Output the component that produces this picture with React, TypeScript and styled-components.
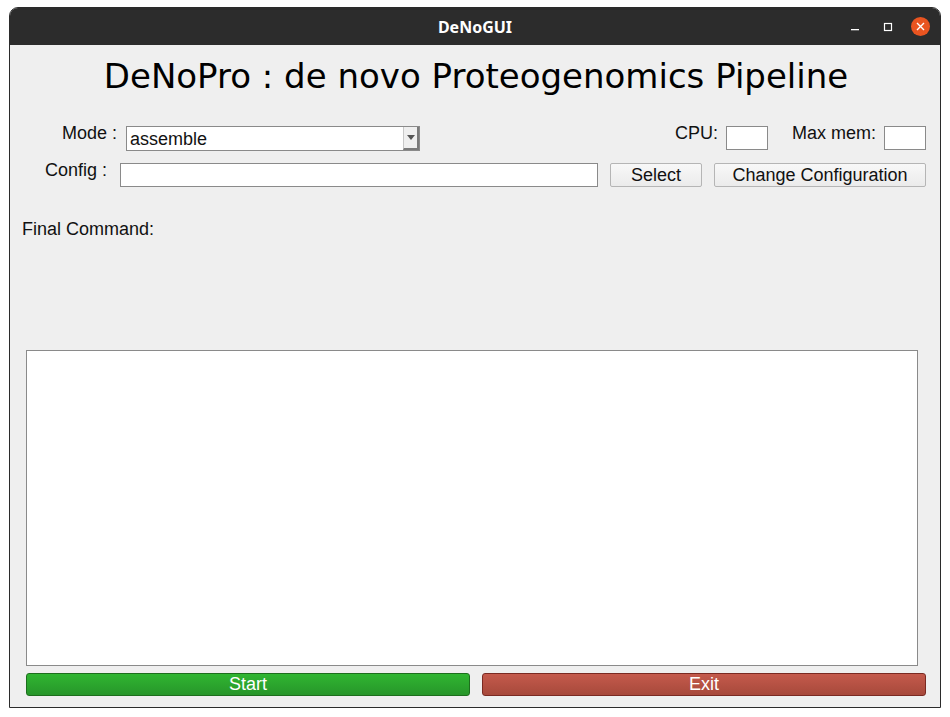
import React from "react";
import styled, { createGlobalStyle } from "styled-components";

const Global = createGlobalStyle`
  html, body { margin: 0; padding: 0; background: #ffffff; }
  * { box-sizing: border-box; }
`;

const Window = styled.div`
  margin: 7px 0 0 9px;
  width: 932px;
  height: 701px;
  border: 1px solid #2b2b2b;
  border-radius: 9px 9px 0 0;
  background: #efefef;
  display: flex;
  flex-direction: column;
  overflow: hidden;
`;

const TitleBar = styled.div`
  height: 37px;
  flex: none;
  background: #2c2c2c;
  position: relative;
  display: flex;
  align-items: center;
  justify-content: center;
  color: #ffffff;
  font-family: "Noto Sans", "DejaVu Sans", sans-serif;
  font-weight: 700;
  font-size: 16px;
`;

const WinControls = styled.div`
  position: absolute;
  right: 3px;
  top: 0;
  height: 100%;
  display: flex;
  align-items: center;
`;

const CtlButton = styled.div`
  width: 33px;
  height: 30px;
  display: flex;
  align-items: center;
  justify-content: center;
`;

const CloseDot = styled.div`
  width: 19px;
  height: 19px;
  border-radius: 50%;
  background: #e95420;
  display: flex;
  align-items: center;
  justify-content: center;
`;

const Content = styled.div`
  flex: 1;
  display: flex;
  flex-direction: column;
  padding: 0 14px 0 16px;
  font-family: "Liberation Sans", Arial, sans-serif;
  font-size: 18px;
  color: #111;
`;

const Heading = styled.h1`
  margin: 10px 0 0 0;
  font-family: "DejaVu Sans", sans-serif;
  font-weight: 400;
  font-size: 34px;
  text-align: center;
  color: #000;
  line-height: 42px;
`;

const Row = styled.div<{ $mt: number }>`
  display: flex;
  align-items: flex-start;
  margin-top: ${(p) => p.$mt}px;
  height: 25px;
`;

const Label = styled.span<{ $w: number; $dy?: number }>`
  width: ${(p) => p.$w}px;
  text-align: right;
  line-height: 20px;
  margin-top: ${(p) => p.$dy ?? -3}px;
  flex: none;
  white-space: nowrap;
`;

const Combo = styled.div`
  width: 294px;
  height: 25px;
  margin-left: 9px;
  background: #fff;
  border: 1px solid #8a8a8a;
  display: flex;
  align-items: stretch;
  font-size: 18px;
  flex: none;
`;

const ComboText = styled.div`
  flex: 1;
  padding-left: 3px;
  line-height: 24px;
`;

const ComboArrow = styled.div`
  width: 16px;
  border-left: 1px solid #c8c8c8;
  border-right: 2px solid #7a7a7a;
  border-bottom: 2px solid #7a7a7a;
  background: #efefef;
  display: flex;
  align-items: center;
  justify-content: center;
`;

const Triangle = styled.div`
  width: 0;
  height: 0;
  border-left: 4px solid transparent;
  border-right: 4px solid transparent;
  border-top: 5px solid #555;
`;

const Spacer = styled.div`
  flex: 1;
`;

const SmallInput = styled.div<{ $ml: number }>`
  width: 42px;
  height: 24px;
  background: #fff;
  border: 1px solid #8a8a8a;
  margin-left: ${(p) => p.$ml}px;
  flex: none;
`;

const TextInput = styled.div<{ $ml: number; $w: number }>`
  width: ${(p) => p.$w}px;
  height: 24px;
  background: #fff;
  border: 1px solid #8a8a8a;
  margin-left: ${(p) => p.$ml}px;
  flex: none;
`;

const PlainButton = styled.div<{ $ml: number; $w: number }>`
  width: ${(p) => p.$w}px;
  height: 24px;
  margin-left: ${(p) => p.$ml}px;
  border: 1px solid #b5b5b5;
  border-radius: 2px;
  background: linear-gradient(#f8f8f8, #ebebeb);
  display: flex;
  align-items: center;
  justify-content: center;
  line-height: 22px;
  font-size: 18px;
  flex: none;
`;

const FinalCommand = styled.div`
  margin-top: 31px;
  margin-left: -4px;
  line-height: 20px;
`;

const Output = styled.div`
  margin-top: 111px;
  width: 892px;
  height: 316px;
  background: #fff;
  border: 1px solid #8a8a8a;
  flex: none;
`;

const BottomRow = styled.div`
  display: flex;
  gap: 12px;
  margin-top: 7px;
  width: 900px;
`;

const ActionButton = styled.div<{ $kind: "go" | "stop" }>`
  flex: 1;
  height: 23px;
  border-radius: 3px;
  border: 1px solid ${(p) => (p.$kind === "go" ? "#1d6e1d" : "#7a2a22")};
  background: ${(p) =>
    p.$kind === "go"
      ? "linear-gradient(#30b531, #27962a)"
      : "linear-gradient(#c45a4c, #a7493b)"};
  color: #fff;
  font-family: "Liberation Sans Narrow", "Liberation Sans", sans-serif;
  font-stretch: condensed;
  font-size: 18px;
  display: flex;
  align-items: center;
  justify-content: center;
  line-height: 21px;
`;

export default function App() {
  return (
    <>
      <Global />
      <Window>
        <TitleBar>
          DeNoGUI
          <WinControls>
            <CtlButton>
              <svg width="10" height="10" viewBox="0 0 10 10">
                <rect x="1" y="7" width="8" height="1.3" fill="#fff" />
              </svg>
            </CtlButton>
            <CtlButton>
              <svg width="10" height="10" viewBox="0 0 10 10">
                <rect x="1.5" y="1.5" width="7" height="7" fill="none" stroke="#fff" strokeWidth="1.2" />
              </svg>
            </CtlButton>
            <CtlButton>
              <CloseDot>
                <svg width="9" height="9" viewBox="0 0 9 9">
                  <path d="M1 1 L8 8 M8 1 L1 8" stroke="#fff" strokeWidth="1.4" />
                </svg>
              </CloseDot>
            </CtlButton>
          </WinControls>
        </TitleBar>
        <Content>
          <Heading>DeNoPro : de novo Proteogenomics Pipeline</Heading>
          <Row $mt={29}>
            <Label $w={91}>Mode :</Label>
            <Combo>
              <ComboText>assemble</ComboText>
              <ComboArrow>
                <Triangle />
              </ComboArrow>
            </Combo>
            <Spacer />
            <Label $w={60}>CPU:</Label>
            <SmallInput $ml={8} />
            <Label $w={108}>Max mem:</Label>
            <SmallInput $ml={8} />
          </Row>
          <Row $mt={12}>
            <Label $w={81}>Config :</Label>
            <TextInput $ml={13} $w={478} />
            <PlainButton $ml={12} $w={92}>Select</PlainButton>
            <PlainButton $ml={12} $w={212}>Change Configuration</PlainButton>
          </Row>
          <FinalCommand>Final Command:</FinalCommand>
          <Output />
          <BottomRow>
            <ActionButton $kind="go">Start</ActionButton>
            <ActionButton $kind="stop">Exit</ActionButton>
          </BottomRow>
        </Content>
      </Window>
    </>
  );
}
